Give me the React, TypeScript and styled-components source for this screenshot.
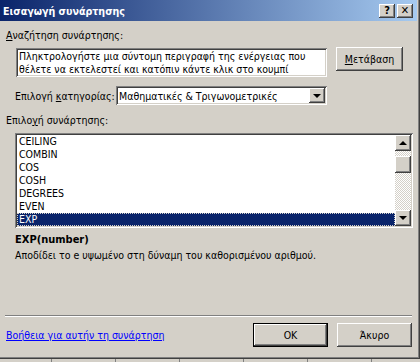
import React from "react";
import styled, { createGlobalStyle, css } from "styled-components";

const Global = createGlobalStyle`
  html, body { margin: 0; padding: 0; background: #D4D0C8; }
  body { font-family: Tahoma, "DejaVu Sans Condensed", "DejaVu Sans", sans-serif; font-size: 10.5px; color: #000; }
  * { box-sizing: border-box; }
`;

const raised = css`
  background: #D4D0C8;
  box-shadow: inset -1px -1px #404040, inset 1px 1px #ffffff, inset -2px -2px #808080, inset 2px 2px #D4D0C8;
`;

const sunken = css`
  background: #ffffff;
  box-shadow: inset 1px 1px #808080, inset -1px -1px #ffffff, inset 2px 2px #404040, inset -2px -2px #D4D0C8;
`;

const Screen = styled.div`
  width: 420px;
  height: 362px;
  display: flex;
  flex-direction: column;
  overflow: hidden;
`;

const Window = styled.div`
  width: 420px;
  height: 359px;
  display: flex;
  flex-direction: column;
  background: #D4D0C8;
  box-shadow: inset -1px -1px #404040, inset -2px -2px #808080;
`;

const TitleBar = styled.div`
  height: 21px;
  margin-right: 3px;
  display: flex;
  align-items: center;
  padding: 0 4px 0 3px;
  background: linear-gradient(to right, #0A246A, #A6CAF0);
`;

const Title = styled.div`
  flex: 1;
  color: #fff;
  font-weight: bold;
  font-size: 10.6px;
`;

const CaptionButton = styled.div<{ $gap?: number }>`
  ${raised};
  width: 16px;
  height: 14px;
  margin-left: ${(p) => p.$gap ?? 0}px;
  display: flex;
  align-items: center;
  justify-content: center;
  font-weight: bold;
  font-size: 11px;
  line-height: 1;
`;

const Body = styled.div`
  flex: 1;
  display: flex;
  flex-direction: column;
  padding: 8px 8px 12px 6px;
  white-space: nowrap;
`;

const FieldLabel = styled.div<{ $top?: number }>`
  margin-top: ${(p) => p.$top ?? 0}px;
  line-height: 13px;
  height: 13px;
`;

const Access = styled.span`
  text-decoration: underline;
`;

const SearchRow = styled.div`
  display: flex;
  align-items: flex-start;
  margin-top: 5px;
  padding-left: 10px;
`;

const SearchBox = styled.div`
  ${sunken};
  width: 311px;
  height: 29px;
  margin-top: 1px;
  padding: 2px 3px;
  line-height: 13px;
  overflow: hidden;
`;

const PushButton = styled.div<{ $width: number; $default?: boolean }>`
  ${raised};
  width: ${(p) => p.$width}px;
  height: 24px;
  display: flex;
  align-items: center;
  justify-content: center;
  ${(p) =>
    p.$default &&
    css`
      box-shadow: inset 0 0 0 1px #000, inset -2px -2px #404040, inset 2px 2px #ffffff, inset -3px -3px #808080;
    `}
`;

const GoButton = styled(PushButton)`
  margin-left: 9px;
`;

const CategoryRow = styled.div`
  display: flex;
  align-items: center;
  margin-top: 9px;
  padding-left: 9px;
`;

const CategoryLabel = styled.div`
  width: 101px;
`;

const Combo = styled.div`
  ${sunken};
  width: 211px;
  height: 19px;
  display: flex;
  align-items: center;
  padding: 2px 2px 2px 3px;
`;

const ComboText = styled.div`
  flex: 1;
`;

const Arrow = styled.div<{ $dir: "up" | "down" }>`
  width: 0;
  height: 0;
  border-left: 4px solid transparent;
  border-right: 4px solid transparent;
  ${(p) =>
    p.$dir === "down"
      ? css`border-top: 4px solid #000;`
      : css`border-bottom: 4px solid #000;`}
`;

const SmallButton = styled.div<{ $h?: number }>`
  ${raised};
  width: 16px;
  height: ${(p) => p.$h ?? 16}px;
  display: flex;
  align-items: center;
  justify-content: center;
  flex: none;
`;

const ListBox = styled.div`
  ${sunken};
  margin-top: 6px;
  margin-left: 9px;
  width: 398px;
  height: 95px;
  padding: 2px;
  display: flex;
`;

const Items = styled.div`
  flex: 1;
  display: flex;
  flex-direction: column;
`;

const Item = styled.div<{ $selected?: boolean }>`
  height: 13px;
  line-height: 13px;
  padding-left: 2px;
  ${(p) =>
    p.$selected &&
    css`
      background: #0A246A;
      color: #fff;
      outline: 1px dotted #D4D0C8;
      outline-offset: -1px;
    `}
`;

const ScrollBar = styled.div`
  width: 16px;
  display: flex;
  flex-direction: column;
  background: repeating-conic-gradient(#ffffff 0 25%, #D4D0C8 0 50%) 0 0 / 2px 2px;
`;

const Track = styled.div`
  flex: 1;
`;

const Thumb = styled.div`
  ${raised};
  width: 16px;
  height: 17px;
`;

const Signature = styled.div`
  margin-top: 5px;
  margin-left: 9px;
  font-weight: bold;
  font-size: 11px;
  line-height: 14px;
`;

const Description = styled.div`
  margin-top: 1px;
  margin-left: 9px;
  line-height: 14px;
`;

const Spacer = styled.div`
  flex: 1;
`;

const Separator = styled.div`
  height: 2px;
  margin-left: -1px;
  border-top: 1px solid #808080;
  border-bottom: 1px solid #ffffff;
`;

const Footer = styled.div`
  display: flex;
  align-items: center;
  margin-top: 6px;
`;

const HelpLink = styled.a`
  flex: 1;
  color: #0000FF;
  text-decoration: underline;
  cursor: pointer;
`;

const FooterButtons = styled.div`
  display: flex;
  gap: 9px;
`;

const Sheet = styled.div`
  flex: 1;
  display: flex;
  background: #D4D0C8;
`;

const SheetCell = styled.div<{ $w: number }>`
  width: ${(p) => p.$w}px;
  flex: none;
  border-right: 1px solid #808080;
`;

const functions = ["CEILING", "COMBIN", "COS", "COSH", "DEGREES", "EVEN", "EXP"];

export default function App() {
  return (
    <>
      <Global />
      <Screen>
        <Window>
          <TitleBar>
            <Title>Εισαγωγή συνάρτησης</Title>
            <CaptionButton>?</CaptionButton>
            <CaptionButton $gap={2}>✕</CaptionButton>
          </TitleBar>
          <Body>
            <FieldLabel>
              <Access>Α</Access>ναζήτηση συνάρτησης:
            </FieldLabel>
            <SearchRow>
              <SearchBox>
                Πληκτρολογήστε μια σύντομη περιγραφή της ενέργειας που
                <br />
                θέλετε να εκτελεστεί και κατόπιν κάντε κλικ στο κουμπί
              </SearchBox>
              <GoButton $width={67}>
                <span>
                  <Access>Μ</Access>ετάβαση
                </span>
              </GoButton>
            </SearchRow>
            <CategoryRow>
              <CategoryLabel>
                Επιλογή <Access>κ</Access>ατηγορίας:
              </CategoryLabel>
              <Combo>
                <ComboText>Μαθηματικές &amp; Τριγωνομετρικές</ComboText>
                <SmallButton $h={15}>
                  <Arrow $dir="down" />
                </SmallButton>
              </Combo>
            </CategoryRow>
            <FieldLabel $top={9}>
              Επιλο<Access>γ</Access>ή συνάρτησης:
            </FieldLabel>
            <ListBox>
              <Items>
                {functions.map((f) => (
                  <Item key={f} $selected={f === "EXP"}>
                    {f}
                  </Item>
                ))}
              </Items>
              <ScrollBar>
                <SmallButton>
                  <Arrow $dir="up" />
                </SmallButton>
                <Track>
                  <Thumb style={{ marginTop: 5 }} />
                </Track>
                <SmallButton>
                  <Arrow $dir="down" />
                </SmallButton>
              </ScrollBar>
            </ListBox>
            <Signature>EXP(number)</Signature>
            <Description>Αποδίδει το e υψωμένο στη δύναμη του καθορισμένου αριθμού.</Description>
            <Spacer />
            <Separator />
            <Footer>
              <HelpLink>Βοήθεια για αυτήν τη συνάρτηση</HelpLink>
              <FooterButtons>
                <PushButton $width={75} $default>
                  OK
                </PushButton>
                <PushButton $width={75}>Άκυρο</PushButton>
              </FooterButtons>
            </Footer>
          </Body>
        </Window>
        <Sheet>
          {[52, 64, 64, 64, 64, 64].map((w, i) => (
            <SheetCell key={i} $w={w} />
          ))}
        </Sheet>
      </Screen>
    </>
  );
}
